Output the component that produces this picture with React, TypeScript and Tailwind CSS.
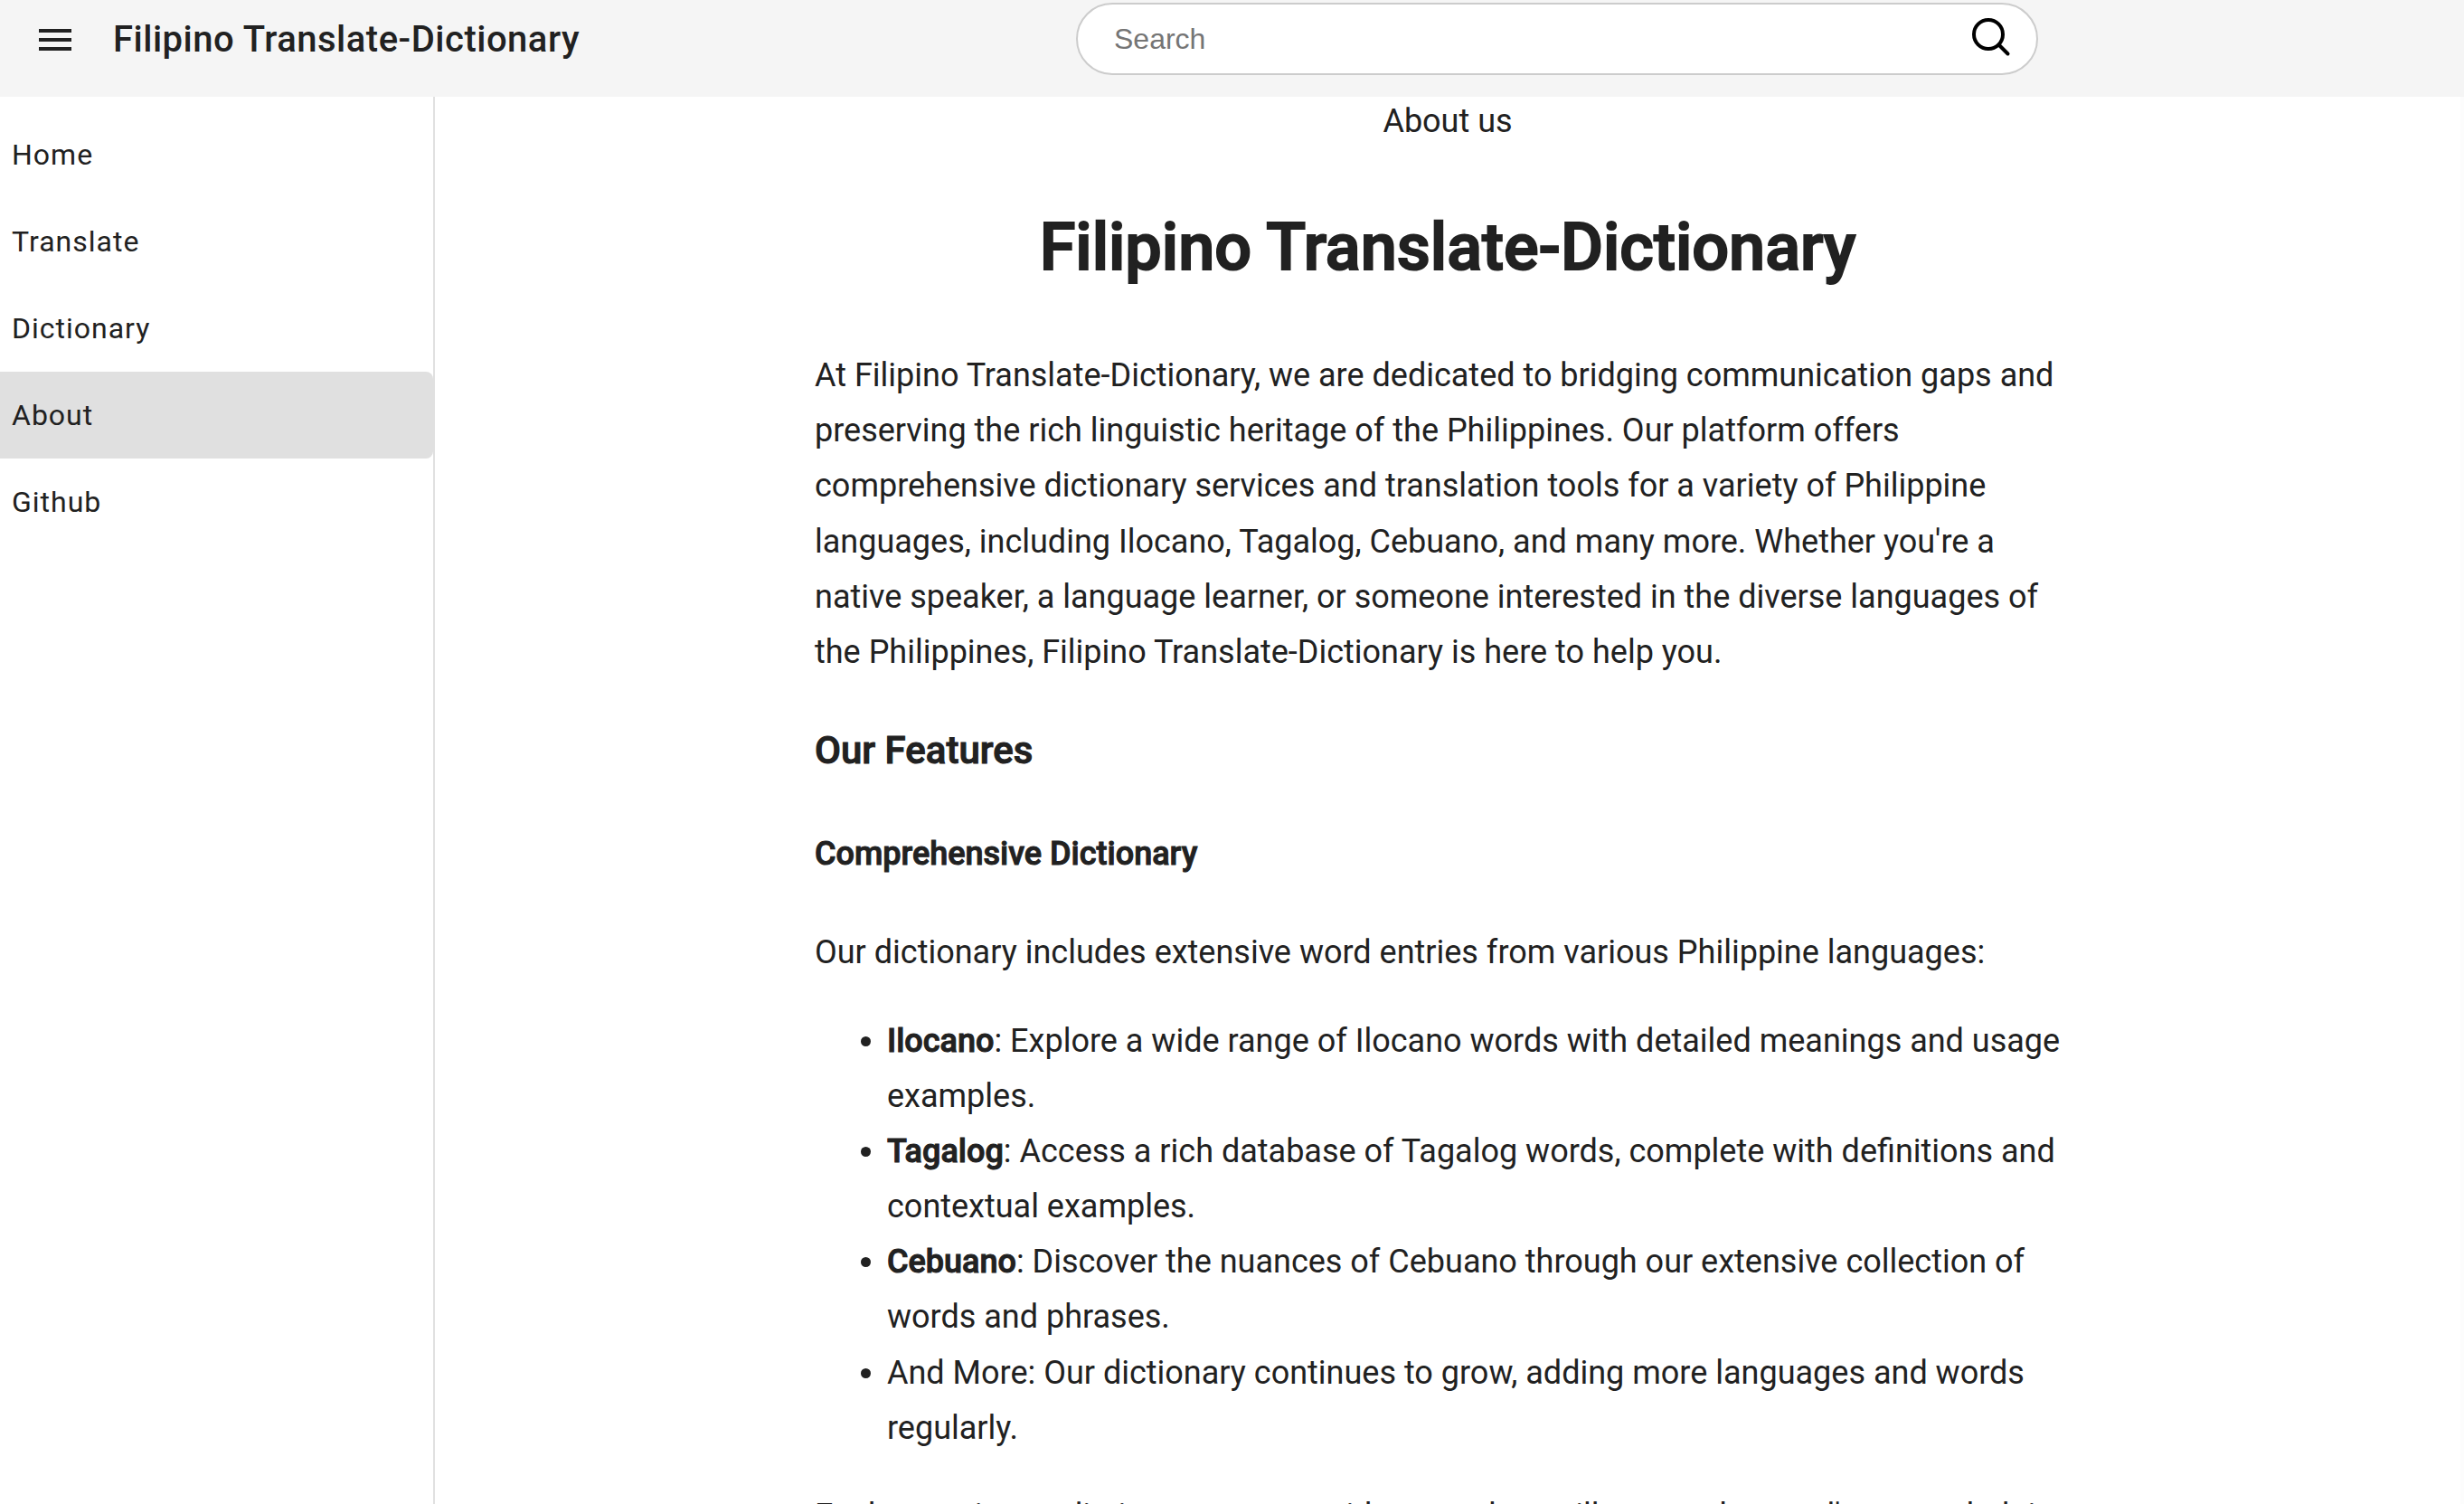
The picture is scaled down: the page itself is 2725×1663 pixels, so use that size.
const navItems = ["Home", "Translate", "Dictionary", "About", "Github"];

const languages = [
  { name: "Ilocano", text: ": Explore a wide range of Ilocano words with detailed meanings and usage examples." },
  { name: "Tagalog", text: ": Access a rich database of Tagalog words, complete with definitions and contextual examples." },
  { name: "Cebuano", text: ": Discover the nuances of Cebuano through our extensive collection of words and phrases." },
  { name: "", text: "And More: Our dictionary continues to grow, adding more languages and words regularly." },
];

function Header() {
  return (
    <header className="flex h-[107px] items-start bg-[#f5f5f5]">
      <div className="flex h-[87px] w-[1190px] shrink-0 items-center">
        <button type="button" aria-label="Menu" className="ml-[37px] flex size-12 items-center justify-center">
          <svg viewBox="0 0 24 24" className="size-12" fill="currentColor" aria-hidden="true">
            <path d="M3 18h18v-2H3v2zm0-5h18v-2H3v2zm0-7v2h18V6H3z" />
          </svg>
        </button>
        <span className="ml-10 text-[40px] font-medium tracking-[0.0125em] whitespace-nowrap">
          Filipino Translate-Dictionary
        </span>
      </div>
      <form
        className="mt-[3px] flex h-20 w-[1064px] items-center rounded-full border-2 border-[#cccccc] bg-white pr-[26px] pl-10"
        onSubmit={(e) => e.preventDefault()}
      >
        <input
          type="search"
          aria-label="Search"
          placeholder="Search"
          className="h-full min-w-0 flex-1 bg-transparent font-['Liberation_Sans',Arial,sans-serif] text-[32px] outline-none placeholder:text-[#757575]"
        />
        <button type="submit" aria-label="Submit search" className="flex size-12 items-center justify-center text-black">
          <svg viewBox="0 0 48 48" className="size-12" fill="none" stroke="currentColor" strokeWidth="4" strokeLinecap="round" aria-hidden="true">
            <circle cx="21" cy="19" r="16" />
            <path d="M32.500 30.500l10 10" />
          </svg>
        </button>
      </form>
    </header>
  );
}

export default function App() {
  return (
    <div className="flex h-screen flex-col overflow-hidden bg-white font-[Roboto,'Helvetica_Neue',sans-serif] text-[#212121]">
      <Header />
      <div className="flex min-h-0 flex-1">
        <nav className="w-[481px] shrink-0 border-r-2 border-[#e0e0e0] pt-4">
          {navItems.map((item) => (
            <a
              key={item}
              href="#"
              aria-current={item === "About" ? "page" : undefined}
              className="flex h-24 items-center rounded-r-lg px-[13px] text-[32px] tracking-[1px] aria-[current=page]:bg-[#e0e0e0]"
            >
              {item}
            </a>
          ))}
        </nav>
        <main className="min-w-0 flex-1 overflow-hidden border-r-4 border-[#fcfcfc]">
          <article className="mx-auto max-w-[1400px] text-[36px] leading-[1.7]">
            <p className="text-center leading-[54px]">About us</p>
            <h1 className="mt-[65px] text-center text-[72px] leading-[96px] font-medium [-webkit-text-stroke:2px_currentColor]">
              Filipino Translate-Dictionary
            </h1>
            <p className="mt-[63px]">
              At Filipino Translate-Dictionary, we are dedicated to bridging communication gaps and preserving the rich
              linguistic heritage of the Philippines. Our platform offers comprehensive dictionary services and
              translation tools for a variety of Philippine languages, including Ilocano, Tagalog, Cebuano, and many
              more. Whether you're a native speaker, a language learner, or someone interested in the diverse languages
              of the Philippines, Filipino Translate-Dictionary is here to help you.
            </p>
            <h2 className="mt-12 text-[42px] leading-[60px] font-medium [-webkit-text-stroke:1px_currentColor]">
              Our Features
            </h2>
            <h3 className="mt-[54px] font-medium [-webkit-text-stroke:1px_currentColor]">Comprehensive Dictionary</h3>
            <p className="mt-12">Our dictionary includes extensive word entries from various Philippine languages:</p>
            <ul className="mt-9 list-disc pl-20">
              {languages.map((l) => (
                <li key={l.text}>
                  {l.name && (
                    <strong className="font-medium [-webkit-text-stroke:1px_currentColor]">{l.name}</strong>
                  )}
                  {l.text}
                </li>
              ))}
            </ul>
            <p className="mt-9">
              Each entry in our dictionary comes with examples to illustrate the word's usage, helping
            </p>
          </article>
        </main>
      </div>
    </div>
  );
}
